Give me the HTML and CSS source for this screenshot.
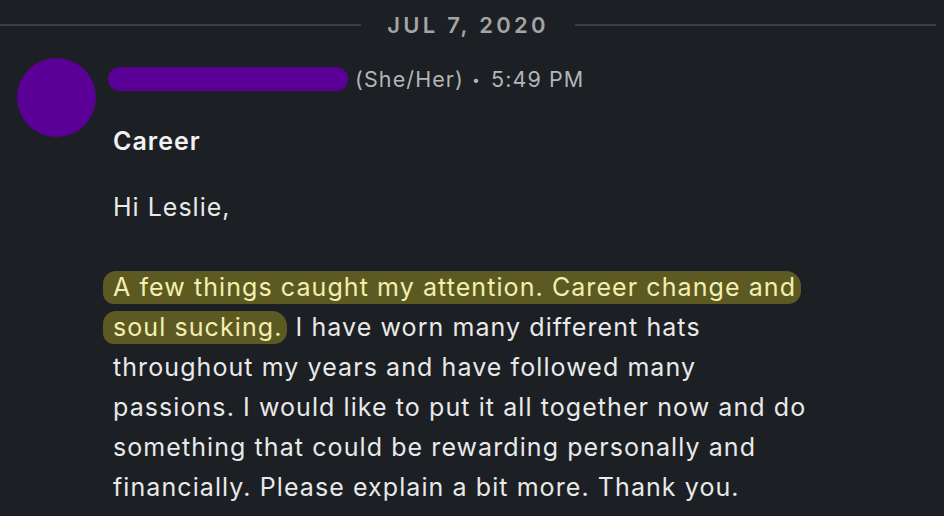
FILE: index.html
```html
<!DOCTYPE html>
<html>
<head>
<meta charset="utf-8">
<link rel="stylesheet" href="styles.css">
</head>
<body>
<div class="divider">
  <span class="line"></span>
  <span class="date">JUL 7, 2020</span>
  <span class="line"></span>
</div>
<div class="message">
  <div class="avatar"></div>
  <div class="content">
    <div class="meta">
      <span class="name"><span class="redact"></span></span>
      <span class="pron">(She/Her)</span>
      <span class="dot">•</span>
      <span class="time">5:49 PM</span>
    </div>
    <div class="subject">Career</div>
    <p class="greet">Hi Leslie,</p>
    <p class="body"><span class="hl">A few things caught my attention. Career change and</span><br><span class="hl">soul sucking.</span> I have worn many different hats throughout my years and have followed many passions. I would like to put it all together now and do something that could be rewarding personally and financially. Please explain a bit more. Thank you.</p>
  </div>
</div>
</body>
</html>
```
FILE: styles.css
```css
html, body {
  margin: 0;
  padding: 0;
  background: #1c1f23;
  width: 944px;
  height: 516px;
  overflow: hidden;
}
body {
  font-family: Inter, "Liberation Sans", sans-serif;
  color: #e9e9ea;
}
.divider {
  display: flex;
  align-items: center;
  height: 50px;
  gap: 26px;
  padding-right: 8px;
}
.line {
  flex: 1;
  height: 2px;
  background: #3b3e42;
}
.date {
  font-size: 22px;
  font-weight: 600;
  letter-spacing: 3.3px;
  color: #a3a4a6;
}
.message {
  display: flex;
  padding-left: 17px;
  margin-top: 8px;
}
.avatar {
  width: 79px;
  height: 79px;
  border-radius: 50%;
  background: #5a0096;
  flex: none;
}
.content {
  margin-left: 12px;
  width: 800px;
}
.meta {
  display: flex;
  align-items: center;
  height: 40px;
  margin-top: 1px;
  font-size: 21.5px;
  letter-spacing: 1.1px;
  color: #b4b5b7;
}
.name {
  display: inline-block;
  width: 240px;
  height: 24px;
  margin-right: 7px;
}
.redact {
  display: block;
  width: 240px;
  height: 24px;
  border-radius: 12px;
  background: #5a0096;
}
.dot {
  margin: 0 10px 0 8px;
  font-size: 14px;
}
.subject {
  font-size: 25px;
  font-weight: 600;
  letter-spacing: 1px;
  color: #f2f2f3;
  margin: 27px 0 0 5px;
}
.greet {
  font-size: 25px;
  letter-spacing: 1px;
  margin: 31px 0 0 5px;
  line-height: 40px;
}
.body {
  font-size: 25px;
  letter-spacing: 1.08px;
  line-height: 40px;
  margin: 40px 0 0 5px;
  width: 700px;
}
.hl {
  background: #5c5a22;
  color: #f2efb0;
  border-radius: 13px 15px 13px 11px;
  padding: 1px 5px 2px 10px;
  margin-left: -10px;
}
```
